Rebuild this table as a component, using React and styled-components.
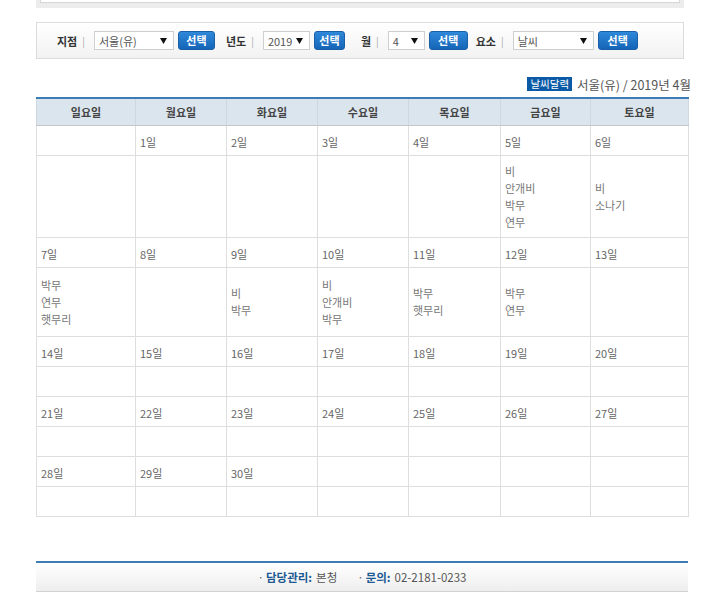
import React from 'react';
import styled, { createGlobalStyle } from 'styled-components';

const Global = createGlobalStyle`
  html, body { margin: 0; padding: 0; background: #fff; }
  body { font-family: "Noto Sans CJK KR", "Noto Sans", sans-serif; color: #555; }
`;

const Page = styled.div`
  width: 652px;
  margin-left: 36px;
  display: flex;
  flex-direction: column;
`;

const TopFrame = styled.div`
  width: 648px;
  box-sizing: border-box;
  background: #ececec;
  padding: 0 4px 5px;
`;

const TopInner = styled.div`
  height: 2px;
  background: #fff;
  border: 1px solid #d6d6d6;
  border-top: none;
`;

const FilterBar = styled.div`
  width: 648px;
  height: 37px;
  box-sizing: border-box;
  margin-top: 14px;
  border: 1px solid #dcdcdc;
  background: linear-gradient(#ffffff, #f2f2f2);
  display: flex;
  align-items: center;
  padding-left: 20px;
`;

const Group = styled.div`
  display: flex;
  align-items: center;
  margin-left: ${p => p.$ml || 0}px;
`;

const Label = styled.span`
  font-size: 11px;
  font-weight: bold;
  color: #333;
  display: flex;
  align-items: center;
`;

const Sep = styled.span`
  font-weight: normal;
  color: #aaa;
  font-size: 10px;
  margin: 0 9px 0 5px;
`;

const Select = styled.div`
  width: ${p => p.$w}px;
  height: 19px;
  box-sizing: border-box;
  border: 1px solid #cfcfcf;
  background: #fff;
  display: flex;
  align-items: center;
  justify-content: space-between;
  padding: 0 6px 0 4px;
  font-size: 11px;
  color: #555;
`;

const Button = styled.button`
  width: ${p => p.$w}px;
  height: 19px;
  margin-left: 4px;
  padding: 0;
  border: 1px solid #1a5ea6;
  border-radius: 3px;
  background: linear-gradient(#2f88d9, #1565b7);
  color: #fff;
  font-family: inherit;
  font-size: 11px;
  font-weight: bold;
  line-height: 17px;
`;

const Arrow = () => (
  <svg width="7" height="6" viewBox="0 0 7 6">
    <path d="M0 0 H7 L3.5 6 Z" fill="#111" />
  </svg>
);

const Caption = styled.div`
  margin-top: 18px;
  margin-right: -3px;
  height: 14px;
  display: flex;
  justify-content: flex-end;
  align-items: center;
  font-size: 12.5px;
  color: #555;
`;

const Badge = styled.span`
  background: #0b5aa6;
  color: #fff;
  font-size: 10.5px;
  line-height: 14px;
  padding: 0 3px;
  margin-right: 5px;
`;

const Table = styled.table`
  margin-top: 6px;
  width: 652px;
  table-layout: fixed;
  border-collapse: collapse;
  border-top: 2px solid #3c7db7;
`;

const Th = styled.th`
  background: #dbe5ee;
  height: 26px;
  padding: 0;
  font-size: 11px;
  font-weight: bold;
  color: #444;
  text-align: center;
  border-left: 1px solid #cfd8e0;
  border-right: 1px solid #cfd8e0;
  border-bottom: 1px solid #c6c6c6;
`;

const Tr = styled.tr`
  height: ${p => p.$h}px;
`;

const Td = styled.td`
  padding: ${p => (p.$weather ? '0 4px' : '3px 4px 0')};
  font-size: 11px;
  line-height: 17px;
  color: ${p => (p.$weather ? '#777' : '#666')};
  border: 1px solid #dedede;
  vertical-align: middle;
  text-align: left;
`;

const Line = styled.div``;

const Footer = styled.div`
  margin-top: 44px;
  height: 31px;
  box-sizing: border-box;
  border-top: 2px solid #3c7db3;
  border-bottom: 1px solid #d2d2d2;
  background: linear-gradient(#ffffff, #eeeeee);
  display: flex;
  justify-content: center;
  align-items: center;
  font-size: 11.5px;
  color: #555;
  gap: 20px;
`;

const FooterItem = styled.span`
  display: flex;
  align-items: center;
`;

const Dot = styled.span`
  color: #666;
  margin-right: 2px;
`;

const FLabel = styled.b`
  color: #1d5a93;
  margin-right: 4px;
`;

const days = ['일요일', '월요일', '화요일', '수요일', '목요일', '금요일', '토요일'];
const widths = [99, 91, 91, 91, 92, 90, 98];

const weeks = [
  {
    dates: ['', '1일', '2일', '3일', '4일', '5일', '6일'],
    weather: [[], [], [], [], [], ['비', '안개비', '박무', '연무'], ['비', '소나기']],
  },
  {
    dates: ['7일', '8일', '9일', '10일', '11일', '12일', '13일'],
    weather: [['박무', '연무', '햇무리'], [], ['비', '박무'], ['비', '안개비', '박무'], ['박무', '햇무리'], ['박무', '연무'], []],
  },
  {
    dates: ['14일', '15일', '16일', '17일', '18일', '19일', '20일'],
    weather: [[], [], [], [], [], [], []],
  },
  {
    dates: ['21일', '22일', '23일', '24일', '25일', '26일', '27일'],
    weather: [[], [], [], [], [], [], []],
  },
  {
    dates: ['28일', '29일', '30일', '', '', '', ''],
    weather: [[], [], [], [], [], [], []],
  },
];

const weatherRowHeight = wk => {
  const n = Math.max(...wk.weather.map(l => l.length));
  if (n === 0) return 30;
  return n * 13 + 30;
};

const filters = [
  { label: '지점', value: '서울(유)', sw: 80, bw: 37, ml: 0 },
  { label: '년도', value: '2019', sw: 47, bw: 31, ml: 11 },
  { label: '월', value: '4', sw: 37, bw: 39, ml: 16 },
  { label: '요소', value: '날씨', sw: 81, bw: 40, ml: 8 },
];

export default function App() {
  return (
    <>
      <Global />
      <Page>
        <TopFrame>
          <TopInner />
        </TopFrame>
        <FilterBar>
          {filters.map(f => (
            <Group key={f.label} $ml={f.ml}>
              <Label>
                {f.label}
                <Sep>|</Sep>
              </Label>
              <Select $w={f.sw}>
                <span>{f.value}</span>
                <Arrow />
              </Select>
              <Button $w={f.bw}>선택</Button>
            </Group>
          ))}
        </FilterBar>
        <Caption>
          <Badge>날씨달력</Badge>
          서울(유) / 2019년 4월
        </Caption>
        <Table>
          <colgroup>
            {widths.map((w, i) => (
              <col key={i} style={{ width: w }} />
            ))}
          </colgroup>
          <thead>
            <tr>
              {days.map(d => (
                <Th key={d}>{d}</Th>
              ))}
            </tr>
          </thead>
          <tbody>
            {weeks.map((wk, wi) => (
              <React.Fragment key={wi}>
                <Tr $h={30}>
                  {wk.dates.map((d, i) => (
                    <Td key={i}>{d || '\u00a0'}</Td>
                  ))}
                </Tr>
                <Tr $h={weatherRowHeight(wk)}>
                  {wk.weather.map((lines, i) => (
                    <Td key={i} $weather>
                      {lines.length ? lines.map((l, j) => <Line key={j}>{l}</Line>) : '\u00a0'}
                    </Td>
                  ))}
                </Tr>
              </React.Fragment>
            ))}
          </tbody>
        </Table>
        <Footer>
          <FooterItem>
            <Dot>·</Dot>
            <FLabel>담당관리:</FLabel>
            본청
          </FooterItem>
          <FooterItem>
            <Dot>·</Dot>
            <FLabel>문의:</FLabel>
            02-2181-0233
          </FooterItem>
        </Footer>
      </Page>
    </>
  );
}
